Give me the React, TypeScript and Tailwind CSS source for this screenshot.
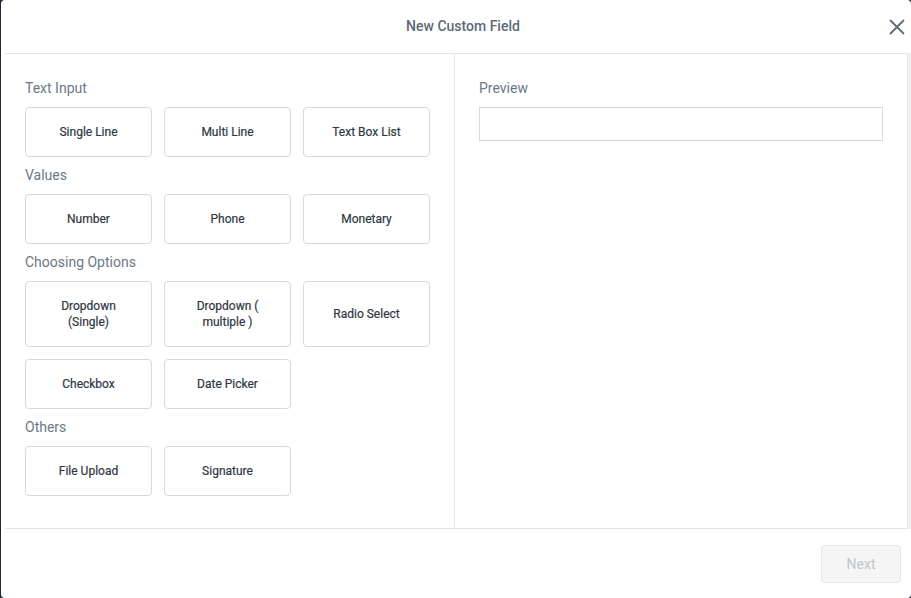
import React from "react";

const Btn = ({ children, tall }: { children: React.ReactNode; tall?: boolean }) => (
  <button
    className={`${tall ? "h-[66px]" : "h-[50px]"} w-[127px] rounded-[4px] border border-[#d6d9de] bg-white px-3 text-[12px] font-normal leading-[16px] text-[#2f3744] flex items-center justify-center text-center`}
    style={{ WebkitTextStroke: "0.2px #2f3744" }}
  >
    {children}
  </button>
);

const Label = ({ children, className = "" }: { children: React.ReactNode; className?: string }) => (
  <div className={`text-[14px] leading-5 text-[#6b7985] ${className}`}>{children}</div>
);

export default function App() {
  return (
    <div className="h-[598px] w-[911px] bg-[#1f2a37] overflow-hidden" style={{ fontFamily: "Roboto, 'Noto Sans', sans-serif" }}>
      <div className="ml-px h-[598px] rounded-[4px] bg-white flex flex-col">
        <div className="h-[53px] flex items-center pl-[42px]">
          <div className="flex-1 text-center text-[14px] font-medium text-[#5d6a75]">New Custom Field</div>
          <div className="w-[28px] flex items-center justify-center">
            <svg width="16" height="16" viewBox="0 0 16 16" fill="none" stroke="#5f6a74" strokeWidth="1.8" strokeLinecap="round">
              <path d="M1.5 1.5 L14.5 14.5 M14.5 1.5 L1.5 14.5" />
            </svg>
          </div>
        </div>
        <div className="flex ml-[4px]">
          <div className="flex flex-1 h-[476px] border-t border-b border-[#e3e5e8]">
            <div className="w-[450px] border-r border-[#e3e5e8] pl-[20px] pr-[24px] pt-[24px]">
              <Label className="mb-[9px]">Text Input</Label>
              <div className="flex gap-[12px]">
                <Btn>Single Line</Btn>
                <Btn>Multi Line</Btn>
                <Btn>Text Box List</Btn>
              </div>
              <Label className="mt-[8px] mb-[9px]">Values</Label>
              <div className="flex gap-[12px]">
                <Btn>Number</Btn>
                <Btn>Phone</Btn>
                <Btn>Monetary</Btn>
              </div>
              <Label className="mt-[8px] mb-[9px]">Choosing Options</Label>
              <div className="flex flex-wrap gap-[12px] w-[405px]">
                <Btn tall>
                  Dropdown
                  <br />
                  (Single)
                </Btn>
                <Btn tall>
                  Dropdown (<br />
                  multiple )
                </Btn>
                <Btn tall>Radio Select</Btn>
                <Btn>Checkbox</Btn>
                <Btn>Date Picker</Btn>
              </div>
              <Label className="mt-[8px] mb-[9px]">Others</Label>
              <div className="flex gap-[12px]">
                <Btn>File Upload</Btn>
                <Btn>Signature</Btn>
              </div>
            </div>
            <div className="flex-1 border-r border-[#e3e5e8] px-[24px] pt-[24px]">
              <Label className="mb-[9px]">Preview</Label>
              <div className="h-[34px] border border-[#d6d9de] bg-white" />
            </div>
          </div>
          <div className="w-[3px] bg-[#f1f1f1]" />
        </div>
        <div className="flex justify-end pt-[16px] pr-[10px]">
          <button className="h-[38px] w-[80px] rounded-[4px] border border-[#e4e6e8] bg-[#f5f5f5] text-[14px] text-[#c2c5c8]">
            Next
          </button>
        </div>
      </div>
    </div>
  );
}
